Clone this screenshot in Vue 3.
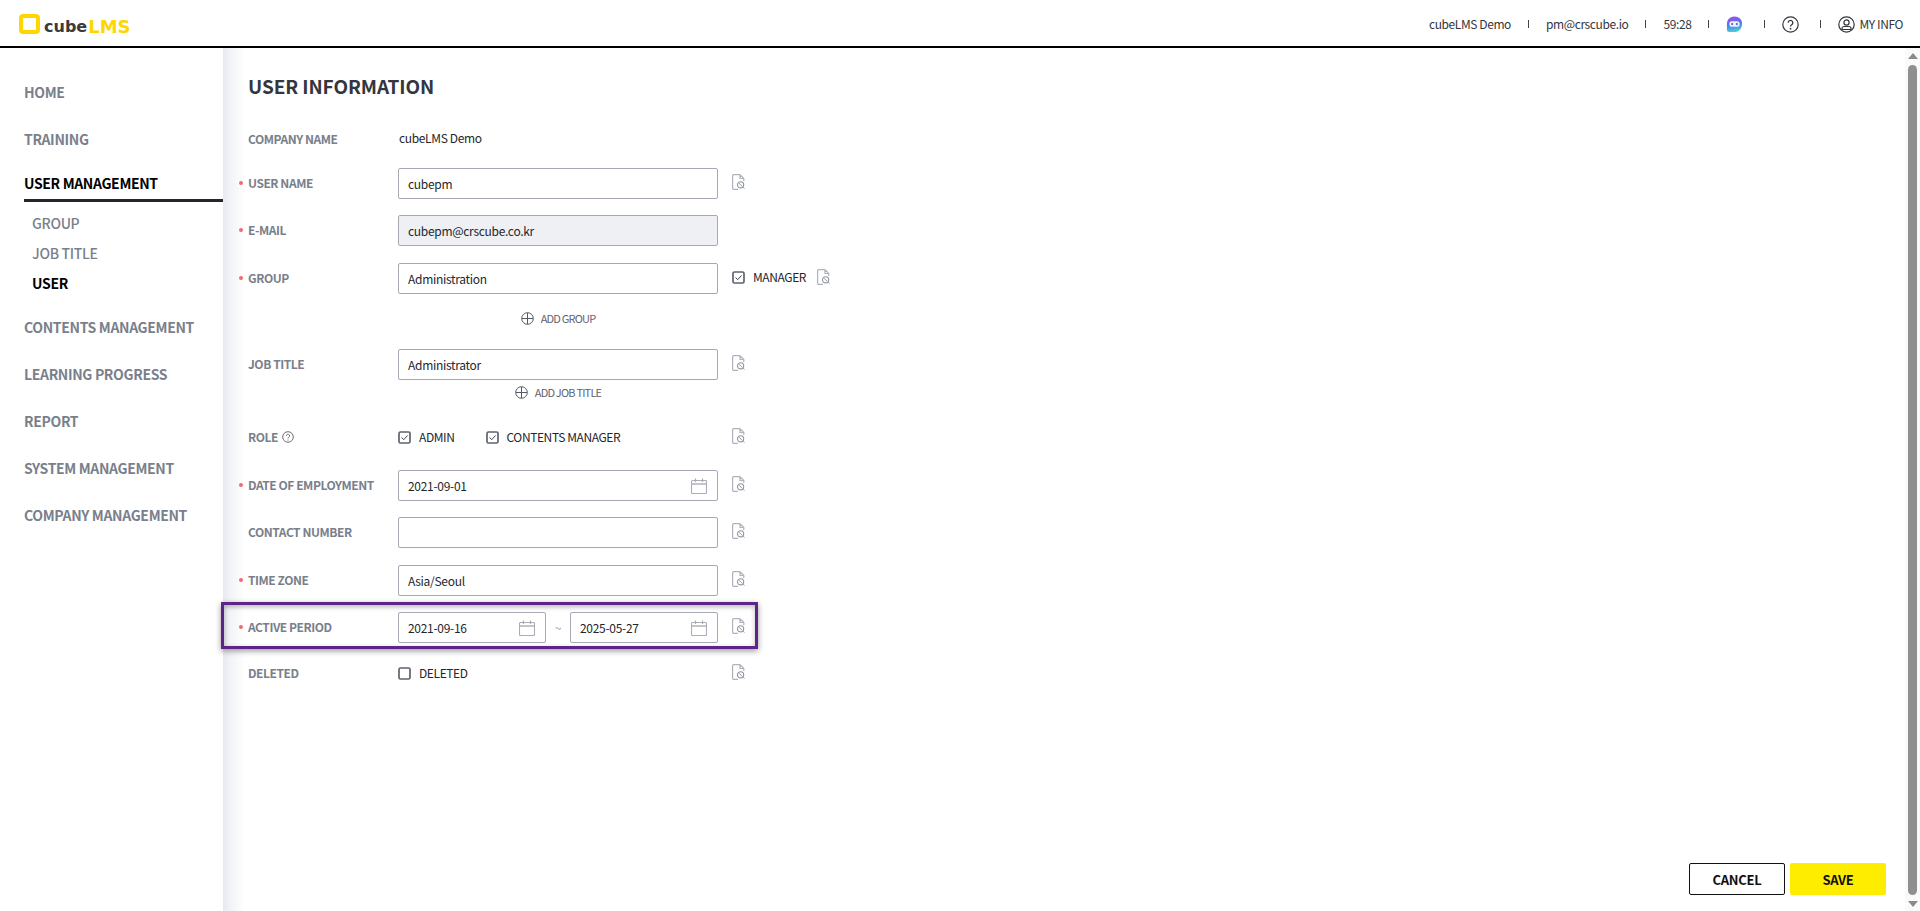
<script setup>
const mainNav = ['HOME', 'TRAINING']
const subNav = ['GROUP', 'JOB TITLE']
const lowerNav = ['CONTENTS MANAGEMENT', 'LEARNING PROGRESS', 'REPORT', 'SYSTEM MANAGEMENT', 'COMPANY MANAGEMENT']
</script>

<template>
  <div class="app">
    <svg class="defs" width="0" height="0" aria-hidden="true">
      <symbol id="doc" viewBox="0 0 13 16">
        <path d="M8 .7H1.600a1 1 0 0 0-1 1v12.600a1 1 0 0 0 1 1H6M8 .7l3.800 3.800V7M8 .7v3.800h3.800" fill="none" stroke="#aeb2bd" stroke-width="1.200"/>
        <circle cx="8.600" cy="10.800" r="3.100" fill="none" stroke="#8f94a0" stroke-width="1.100"/>
        <path d="M7 9.200l3.200 3.200M11 13.200l1.400 1.400" fill="none" stroke="#8f94a0" stroke-width="1"/>
      </symbol>
      <symbol id="cal" viewBox="0 0 16 16">
        <path d="M1.500 2.500h13a1 1 0 0 1 1 1v11a1 1 0 0 1-1 1h-13a1 1 0 0 1-1-1v-11a1 1 0 0 1 1-1z" fill="none" stroke="#a9adb8" stroke-width="1.100"/>
        <path d="M.5 6h15" stroke="#a9adb8" stroke-width="1.400"/>
        <path d="M4.500 .5v3.500M11.500 .5v3.500" stroke="#a9adb8" stroke-width="1.200"/>
      </symbol>
      <symbol id="plus" viewBox="0 0 13 13">
        <circle cx="6.500" cy="6.500" r="5.800" fill="none" stroke="#555a66" stroke-width="1"/>
        <path d="M6.500 1v11M1 6.500h11" fill="none" stroke="#555a66" stroke-width="1"/>
      </symbol>
      <symbol id="chk" viewBox="0 0 13 13">
        <rect x="1" y="1" width="11" height="11" rx="1.500" fill="#fff" stroke="#5f636d" stroke-width="1.700"/>
        <path d="M3.600 6.500l2.100 2.200 3.800-4.200" fill="none" stroke="#3c3f47" stroke-width="1"/>
      </symbol>
      <symbol id="unchk" viewBox="0 0 13 13">
        <rect x="1" y="1" width="11" height="11" rx="1.500" fill="#fff" stroke="#5f636d" stroke-width="1.700"/>
      </symbol>
      <linearGradient id="botg" x1=".25" y1="0" x2=".45" y2="1">
        <stop offset="0" stop-color="#a848e0"/>
        <stop offset=".5" stop-color="#4f78ee"/>
        <stop offset="1" stop-color="#45d4cf"/>
      </linearGradient>
    </svg>

    <header class="topbar">
      <div class="logo">
        <span class="logo-mark"></span>
        <span class="logo-cube">cube</span><span class="logo-lms">LMS</span>
      </div>
      <div class="topinfo">
        <span>cubeLMS Demo</span><i class="sep"></i>
        <span>pm@crscube.io</span><i class="sep"></i>
        <span>59:28</span><i class="sep"></i>
        <svg class="ico17 gap" viewBox="0 0 17 18">
          <path d="M8.500.5c4.500 0 8 3 8 7.700 0 5-3.500 8.800-8 8.800H3a2.500 2.500 0 0 1-2.500-2.500V8.200C.5 3.500 4 .5 8.500.5z" fill="url(#botg)"/>
          <rect x="3" y="5.500" width="11" height="6" rx="3" fill="#eef0fb"/>
          <circle cx="6" cy="8.500" r="1.100" fill="#4d56c8"/>
          <circle cx="11" cy="8.500" r="1.100" fill="#4d56c8"/>
        </svg><i class="sep"></i>
        <svg class="ico17 gap" viewBox="0 0 17 17">
          <circle cx="8.500" cy="8.500" r="7.700" fill="none" stroke="#33363d" stroke-width="1.200"/>
          <path d="M6.200 6.700a2.300 2.300 0 1 1 3.500 2c-.8.500-1.200.9-1.200 1.800" fill="none" stroke="#33363d" stroke-width="1.300"/>
          <circle cx="8.500" cy="12.700" r=".9" fill="#33363d"/>
        </svg><i class="sep"></i>
        <span class="myinfo">
          <svg class="ico17" viewBox="0 0 17 17">
            <circle cx="8.500" cy="8.500" r="7.700" fill="none" stroke="#33363d" stroke-width="1.200"/>
            <circle cx="8.500" cy="6.500" r="2.600" fill="none" stroke="#33363d" stroke-width="1.200"/>
            <path d="M4 13.500v-1a2 2 0 0 1 2-2h5a2 2 0 0 1 2 2v1z" fill="none" stroke="#33363d" stroke-width="1.200"/>
          </svg>
          <span>MY INFO</span>
        </span>
      </div>
    </header>

    <div class="body">
      <nav class="sidebar">
        <a v-for="n in mainNav" :key="n" class="nav">{{ n }}</a>
        <a class="nav active">USER MANAGEMENT</a>
        <div class="sub">
          <a v-for="n in subNav" :key="n" class="subitem">{{ n }}</a>
          <a class="subitem on">USER</a>
        </div>
        <a v-for="n in lowerNav" :key="n" class="nav">{{ n }}</a>
      </nav>

      <main class="main">
        <h1 class="title">USER INFORMATION</h1>
        <div class="form">
          <div class="row company">
            <label class="lbl">COMPANY NAME</label>
            <span class="val">cubeLMS Demo</span>
          </div>

          <div class="row">
            <label class="lbl req">USER NAME</label>
            <div class="inp">cubepm</div>
            <svg class="doc"><use href="#doc"/></svg>
          </div>

          <div class="row mb17">
            <label class="lbl req">E-MAIL</label>
            <div class="inp off">cubepm@crscube.co.kr</div>
          </div>

          <div class="row">
            <label class="lbl req">GROUP</label>
            <div class="inp up1">Administration</div>
            <span class="chk mgr"><svg class="box"><use href="#chk"/></svg>MANAGER</span>
            <svg class="doc mgrdoc"><use href="#doc"/></svg>
          </div>

          <div class="add addgroup">
            <svg class="plus"><use href="#plus"/></svg>ADD GROUP
          </div>

          <div class="row tight">
            <label class="lbl">JOB TITLE</label>
            <div class="inp up1">Administrator</div>
            <svg class="doc"><use href="#doc"/></svg>
          </div>

          <div class="add addjob">
            <svg class="plus"><use href="#plus"/></svg>ADD JOB TITLE
          </div>

          <div class="row mb17">
            <label class="lbl">ROLE<svg class="qm" viewBox="0 0 12 12"><circle cx="6" cy="6" r="5.300" fill="none" stroke="#5c606b" stroke-width=".9"/><path d="M4.400 4.800a1.600 1.600 0 1 1 2.400 1.400c-.5.300-.8.600-.8 1.200" fill="none" stroke="#5c606b" stroke-width=".9"/><circle cx="6" cy="9" r=".6" fill="#5c606b"/></svg></label>
            <div class="field">
              <span class="chk first"><svg class="box"><use href="#chk"/></svg>ADMIN</span>
              <span class="chk"><svg class="box"><use href="#chk"/></svg>CONTENTS MANAGER</span>
            </div>
            <svg class="doc"><use href="#doc"/></svg>
          </div>

          <div class="row">
            <label class="lbl req">DATE OF EMPLOYMENT</label>
            <div class="inp date">2021-09-01<svg class="cal"><use href="#cal"/></svg></div>
            <svg class="doc"><use href="#doc"/></svg>
          </div>

          <div class="row mb17">
            <label class="lbl">CONTACT NUMBER</label>
            <div class="inp"></div>
            <svg class="doc"><use href="#doc"/></svg>
          </div>

          <div class="row">
            <label class="lbl req">TIME ZONE</label>
            <div class="inp up1">Asia/Seoul</div>
            <svg class="doc"><use href="#doc"/></svg>
          </div>

          <div class="row period">
            <label class="lbl req">ACTIVE PERIOD</label>
            <div class="field dates">
              <div class="inp date half">2021-09-16<svg class="cal"><use href="#cal"/></svg></div>
              <span class="tilde">~</span>
              <div class="inp date half">2025-05-27<svg class="cal"><use href="#cal"/></svg></div>
            </div>
            <svg class="doc"><use href="#doc"/></svg>
            <div class="highlight"></div>
          </div>

          <div class="row">
            <label class="lbl">DELETED</label>
            <div class="field">
              <span class="chk"><svg class="box"><use href="#unchk"/></svg>DELETED</span>
            </div>
            <svg class="doc"><use href="#doc"/></svg>
          </div>
        </div>

        <div class="actions">
          <button class="btn cancel">CANCEL</button>
          <button class="btn save">SAVE</button>
        </div>
      </main>

      <div class="scrollbar">
        <span class="arrow up"></span>
        <span class="thumb"></span>
        <span class="arrow down"></span>
      </div>
    </div>
  </div>
</template>

<style>
html, body { margin: 0; height: 100%; overflow: hidden; background: #fff; }
</style>

<style scoped>
* { box-sizing: border-box; }
.app {
  height: 100vh;
  display: flex;
  flex-direction: column;
  font-family: "Noto Sans CJK KR", "Noto Sans", sans-serif;
  color: #23262d;
  position: relative;
}
.defs { position: absolute; }

.topbar {
  height: 48px;
  flex: none;
  border-bottom: 2px solid #000;
  display: flex;
  justify-content: space-between;
  align-items: center;
  padding: 0 17px 0 19px;
}
.logo { display: flex; align-items: flex-end; height: 21px; font-family: "DejaVu Sans", sans-serif; font-weight: 700; line-height: 17px; }
.logo-mark { width: 21px; height: 20px; border: 4px solid #ffd600; border-radius: 4px; margin-right: 4px; }
.logo-cube { font-size: 16px; color: #3a3a3a; margin-bottom: -1px; }
.logo-lms { font-size: 18px; color: #ffd600; margin-left: 1px; margin-bottom: -1px; }

.topinfo { display: flex; align-items: center; font-size: 12px; letter-spacing: -.4px; color: #33363d; height: 46px; }
.sep { width: 1px; height: 8px; background: #444; margin: 2px 17px 0; }
.ico17 { width: 17px; height: 17px; flex: none; margin-top: 2px; }
.ico17.gap { margin-right: 4px; }
.myinfo { display: flex; align-items: center; gap: 4px; }

.body { flex: 1; display: flex; min-height: 0; }

.sidebar { width: 223px; flex: none; padding: 30px 0 0 24px; display: flex; flex-direction: column; align-items: stretch; }
.nav { font-size: 14px; font-weight: 700; letter-spacing: -.35px; color: #7a7f8c; height: 28px; line-height: 28px; margin-bottom: 19px; white-space: nowrap; }
.nav.active { color: #000; height: 30px; margin-bottom: 0; border-bottom: 3px solid #23262d; line-height: 23px; }
.sub { padding: 6px 0 0 8px; margin-bottom: 15px; display: flex; flex-direction: column; }
.subitem { font-size: 14px; font-weight: 500; letter-spacing: -.3px; color: #7a7f8c; height: 30px; line-height: 30px; }
.subitem.on { color: #000; font-weight: 700; }

.main {
  flex: 1;
  min-width: 0;
  display: flex;
  flex-direction: column;
  padding: 26px 19px 16px 25px;
  background: linear-gradient(90deg, #e6e9ef 0, #f3f4f7 8px, #fff 22px) no-repeat left top / 24px 100%;
}
.title { margin: 0 0 26px; font-size: 19px; font-weight: 700; line-height: 24px; color: #33363d; letter-spacing: -.1px; }

.form { flex: 1; }
.row { position: relative; display: flex; align-items: center; height: 31px; margin-bottom: 16px; }
.row.company { height: 30px; margin-bottom: 14px; }
.row.tight { margin-bottom: 3px; }
.row.mb17 { margin-bottom: 17px; }
.row.period { margin-bottom: 15px; }

.lbl { width: 150px; flex: none; font-size: 12px; font-weight: 700; letter-spacing: -.45px; color: #7a7f8c; position: relative; display: flex; align-items: center; margin-top: -2px; white-space: nowrap; }
.lbl.req::before { content: ""; position: absolute; left: -9px; top: 7px; width: 4px; height: 4px; border-radius: 50%; background: #ef6a72; }
.qm { width: 12px; height: 12px; margin-left: 4px; }
.val { font-size: 12px; letter-spacing: -.35px; color: #23262d; margin: -3px 0 0 1px; }

.inp {
  width: 320px;
  height: 31px;
  flex: none;
  border: 1px solid #a6a9b3;
  border-radius: 2px;
  padding: 0 8px 0 9px;
  font-size: 12px;
  letter-spacing: -.3px;
  line-height: 29px;
  color: #23262d;
  background: #fff;
  display: flex;
  align-items: center;
  justify-content: space-between;
}
.inp.up1 { padding-bottom: 1px; }
.inp.off { background: #eff0f4; }
.inp.half { width: 148px; }
.cal { width: 16px; height: 16px; margin-right: 2px; }
.doc { width: 13px; height: 16px; margin-left: 14px; flex: none; margin-top: -3px; }
.mgrdoc { margin-left: 11px; }

.field { width: 320px; flex: none; display: flex; align-items: center; }
.dates { justify-content: space-between; }
.tilde { font-size: 12px; color: #9a9ea8; width: 24px; text-align: center; }

.chk { display: inline-flex; align-items: center; font-size: 12px; letter-spacing: -.4px; color: #23262d; margin-top: -3px; white-space: nowrap; }
.chk.first { margin-right: 31px; }
.box { width: 13px; height: 13px; margin-right: 8px; margin-top: 3px; flex: none; }
.mgr { margin-left: 14px; margin-top: -5px; }

.add { display: flex; align-items: center; justify-content: center; font-size: 11px; letter-spacing: -.8px; color: #5f636e; height: 20px; width: 320px; margin-left: 150px; }
.addgroup { margin-top: -2px; margin-bottom: 21px; }
.addjob { margin-top: -1px; margin-bottom: 20px; }
.plus { width: 13px; height: 13px; margin-right: 7px; }

.highlight {
  position: absolute;
  left: -27px;
  top: -10px;
  width: 537px;
  height: 47px;
  border: 3px solid #5f2488;
  box-shadow: 0 2px 6px rgba(0, 0, 0, .4), inset 0 2px 5px rgba(0, 0, 0, .28);
  pointer-events: none;
}

.actions { display: flex; justify-content: flex-end; gap: 5px; }
.btn { width: 96px; height: 32px; font-family: inherit; font-size: 13px; font-weight: 700; letter-spacing: -.3px; color: #111; border-radius: 2px; padding: 0; }
.cancel { background: #fff; border: 1px solid #111; }
.save { background: #ffed00; border: 0; }

.scrollbar { width: 15px; flex: none; background: #fafafa; display: flex; flex-direction: column; align-items: center; padding: 5px 0 4px; }
.arrow { width: 0; height: 0; border-left: 5px solid transparent; border-right: 5px solid transparent; flex: none; }
.up { border-bottom: 6px solid #8a8a8a; }
.down { border-top: 6px solid #8a8a8a; }
.thumb { flex: 1; width: 9px; margin: 6px 0 6px; background: #8f8f8f; border-radius: 5px; }
</style>
